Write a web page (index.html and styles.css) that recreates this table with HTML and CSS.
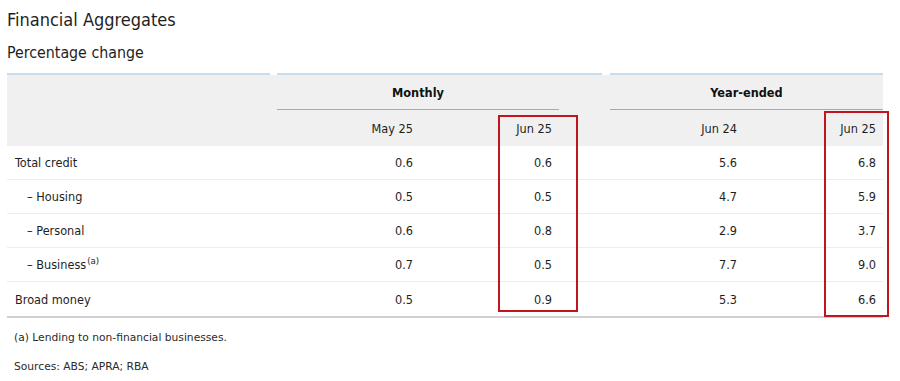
FILE: index.html
```html
<!DOCTYPE html>
<html lang="en">
<head>
<meta charset="utf-8">
<title>Financial Aggregates</title>
<link rel="stylesheet" href="styles.css">
</head>
<body>
<div class="page">
  <h1 class="title">Financial Aggregates</h1>
  <h2 class="subtitle">Percentage change</h2>
  <div class="table-wrap">
    <div class="row bars">
      <div class="bar bar-label"></div>
      <div class="bar bar-month"></div>
      <div class="bar bar-year"></div>
    </div>
    <div class="head">
      <div class="row head-groups">
        <div class="group group-month">Monthly</div>
        <div class="group group-year">Year-ended</div>
      </div>
      <div class="row head-periods">
        <div class="c c1">May 25</div>
        <div class="c c2">Jun 25</div>
        <div class="c c3">Jun 24</div>
        <div class="c c4">Jun 25</div>
      </div>
    </div>
    <div class="row body-row">
      <div class="label">Total credit</div>
      <div class="c c1">0.6</div><div class="c c2">0.6</div><div class="c c3">5.6</div><div class="c c4">6.8</div>
    </div>
    <div class="row body-row">
      <div class="label sub">– Housing</div>
      <div class="c c1">0.5</div><div class="c c2">0.5</div><div class="c c3">4.7</div><div class="c c4">5.9</div>
    </div>
    <div class="row body-row">
      <div class="label sub">– Personal</div>
      <div class="c c1">0.6</div><div class="c c2">0.8</div><div class="c c3">2.9</div><div class="c c4">3.7</div>
    </div>
    <div class="row body-row">
      <div class="label sub">– Business<sup class="note">(a)</sup></div>
      <div class="c c1">0.7</div><div class="c c2">0.5</div><div class="c c3">7.7</div><div class="c c4">9.0</div>
    </div>
    <div class="row body-row last">
      <div class="label">Broad money</div>
      <div class="c c1">0.5</div><div class="c c2">0.9</div><div class="c c3">5.3</div><div class="c c4">6.6</div>
    </div>
    <div class="highlight highlight-month"></div>
    <div class="highlight highlight-year"></div>
  </div>
  <p class="foot">(a) Lending to non-financial businesses.</p>
  <p class="foot sources">Sources: ABS; APRA; RBA</p>
</div>
</body>
</html>
```
FILE: styles.css
```css
html, body {
  margin: 0;
  padding: 0;
  background: #ffffff;
}

body {
  font-family: "DejaVu Sans Condensed", "DejaVu Sans", sans-serif;
  font-stretch: condensed;
  color: #1e1e1e;
}

.page {
  padding: 8px 0 0 7px;
  width: 876px;
}

.title {
  margin: 0;
  font-size: 18px;
  font-weight: normal;
  line-height: 24px;
  color: #1e1e1e;
}

.subtitle {
  margin: 10px 0 0;
  font-size: 15.8px;
  font-weight: normal;
  line-height: 22px;
  color: #1e1e1e;
}

.table-wrap {
  position: relative;
  margin-top: 9px;
  font-size: 12.6px;
}

.row {
  display: grid;
  grid-template-columns: 263px 7px 143px 139px 43px 8px 134px 139px;
}

.bars {
  height: 2px;
}

.bar {
  background: #c9dcee;
}

.bar-label { grid-column: 1; }
.bar-month { grid-column: 3 / 6; }
.bar-year { grid-column: 7 / 9; }

.head {
  background: #f0f0f0;
}

.head-groups {
  height: 35px;
}

.group {
  font-weight: bold;
  color: #111;
  display: flex;
  align-items: center;
  justify-content: center;
  border-bottom: 1px solid #a9a9a9;
}

.group-month { grid-column: 3 / 5; }
.group-year { grid-column: 7 / 9; }

.head-periods {
  height: 36px;
}

.c {
  display: flex;
  align-items: center;
  justify-content: flex-end;
  padding-right: 7px;
}

.c1 { grid-column: 3; }
.c2 { grid-column: 4; }
.c3 { grid-column: 7; }
.c4 { grid-column: 8; }

.body-row {
  height: 34px;
  box-sizing: border-box;
  border-bottom: 1px solid #ededed;
}

.body-row.last {
  height: 36px;
  border-bottom: 2px solid #d0d0d0;
}

.label {
  grid-column: 1;
  display: flex;
  align-items: center;
  padding-left: 8px;
}

.label.sub {
  padding-left: 20px;
}

.note {
  font-size: 9.5px;
  line-height: 1;
  align-self: flex-start;
  margin-top: 8px;
  margin-left: 1px;
}

.highlight {
  position: absolute;
  border: 2px solid #c0151e;
  box-sizing: border-box;
}

.highlight-month {
  left: 491px;
  top: 42px;
  width: 80px;
  height: 197px;
}

.highlight-year {
  left: 817px;
  top: 38px;
  width: 65px;
  height: 206px;
}

.foot {
  margin: 12px 0 0 7px;
  font-family: "DejaVu Sans", sans-serif;
  font-stretch: normal;
  font-size: 10.7px;
  line-height: 16px;
  color: #2a2a2a;
}

.sources {
  margin-top: 13px;
}
```
